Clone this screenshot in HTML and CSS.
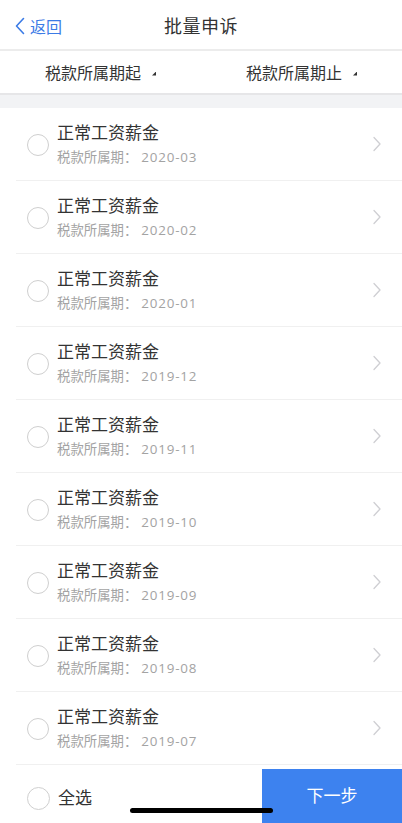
FILE: index.html
```html
<!DOCTYPE html>
<html>

<head>
  <meta charset="utf-8">
  <link rel="stylesheet" href="styles.css">
</head>

<body>
  <div class="page">
    <div class="nav-bar">
      <a class="back">
        <svg width="10" height="18" viewBox="0 0 10 18"><polyline points="8.5,1.5 1.5,9 8.5,16.5" fill="none" stroke="#3b7be6" stroke-width="1.6" stroke-linecap="round" stroke-linejoin="round"/></svg>
        <span>返回</span>
      </a>
      <div class="nav-title">批量申诉</div>
    </div>

    <div class="filter-bar">
      <div class="filter-item">税款所属期起<span class="filter-mark"></span></div>
      <div class="filter-item">税款所属期止<span class="filter-mark"></span></div>
    </div>

    <div class="gap"></div>

    <ul class="record-list" id="list"></ul>

    <div class="footer">
      <label class="select-all">
        <span class="radio"></span>
        <span>全选</span>
      </label>
      <button class="next-btn">下一步</button>
    </div>

    <div class="home-indicator"></div>
  </div>

  <script>
    var periods = ["2020-03", "2020-02", "2020-01", "2019-12", "2019-11", "2019-10", "2019-09", "2019-08", "2019-07"];
    var list = document.getElementById("list");

    periods.forEach(function (p) {
      var li = document.createElement("li");
      li.className = "record";
      li.innerHTML =
        '<span class="radio"></span>' +
        '<div class="record-text">' +
        '<div class="record-name">正常工资薪金</div>' +
        '<div class="record-period">税款所属期：<span class="date">' + p + '</span></div>' +
        '</div>' +
        '<svg class="arrow" width="10" height="16" viewBox="0 0 10 16"><polyline points="2,1.5 8,8 2,14.5" fill="none" stroke="#cfcfd3" stroke-width="1.3" stroke-linecap="round" stroke-linejoin="round"/></svg>';
      list.appendChild(li);
    });
  </script>
</body>

</html>
```

FILE: styles.css
```css
body {
  margin: 0;
  background: #fff;
  font-family: 'Noto Sans CJK SC', 'Noto Sans', sans-serif;
  color: #333;
}

.page {
  position: relative;
  height: 823px;
  overflow: hidden;
  display: flex;
  flex-direction: column;
}

.nav-bar {
  height: 51px;
  display: flex;
  align-items: center;
  justify-content: center;
  position: relative;
  border-bottom: 2px solid #ececec;
  box-sizing: border-box;
}

.back {
  position: absolute;
  left: 15px;
  top: 0;
  height: 51px;
  display: flex;
  align-items: center;
  gap: 5px;
  color: #3b7be6;
  font-size: 16px;
}

.nav-title {
  font-size: 18px;
  color: #333;
  letter-spacing: 0.5px;
}

.filter-bar {
  height: 44px;
  display: flex;
  border-bottom: 2px solid #e6e6e8;
  box-sizing: border-box;
}

.filter-item {
  flex: 1;
  display: flex;
  align-items: center;
  justify-content: center;
  font-size: 16px;
  color: #333;
}

.filter-mark {
  width: 4px;
  height: 4px;
  margin-left: 11px;
  margin-top: 3px;
  background: #333;
  clip-path: polygon(100% 0, 100% 100%, 0 100%);
}

.gap {
  height: 13px;
  background: #f2f3f5;
}

.record-list {
  list-style: none;
  margin: 0;
  padding: 0;
}

.record {
  height: 73px;
  margin-left: 16px;
  padding: 0 20px 0 11px;
  display: flex;
  align-items: center;
  border-bottom: 1px solid #f0f0f0;
  box-sizing: border-box;
}

.radio {
  width: 22px;
  height: 22px;
  border: 1px solid #cfcfcf;
  border-radius: 50%;
  box-sizing: border-box;
  flex-shrink: 0;
}

.record .radio {
  margin-top: 2px;
}

.record-text {
  flex: 1;
  margin-left: 8px;
}

.record-name {
  font-size: 17px;
  line-height: 24px;
  color: #333;
}

.record-period {
  font-size: 13.4px;
  line-height: 24px;
  color: #a3a3a3;
}

.date {
  margin-left: 4px;
  font-family: 'Open Sans', 'Liberation Sans', sans-serif;
  letter-spacing: 0.8px;
}

.footer {
  flex: 1;
  display: flex;
  align-items: flex-end;
}

.select-all {
  flex: 1;
  height: 54px;
  display: flex;
  align-items: center;
  gap: 8px;
  padding-left: 27px;
  font-size: 17px;
  color: #333;
}

.select-all .radio {
  width: 23px;
  height: 23px;
  margin-top: 4px;
}

.next-btn {
  width: 140px;
  height: 54px;
  border: none;
  background: #3d82ef;
  color: #fff;
  font-size: 17px;
  font-family: inherit;
  padding: 0 0 4px;
}

.home-indicator {
  position: absolute;
  left: 130px;
  bottom: 10px;
  width: 143px;
  height: 5px;
  border-radius: 3px;
  background: #000;
}
```
